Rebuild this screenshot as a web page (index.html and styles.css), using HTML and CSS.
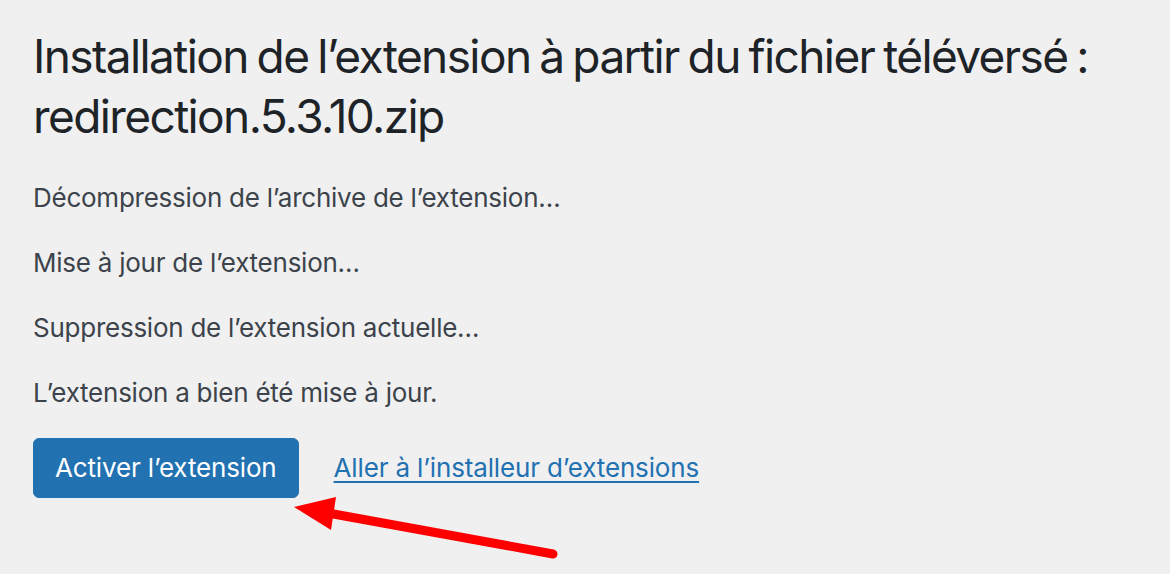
FILE: index.html
```html
<!DOCTYPE html>
<html lang="fr">
<head>
    <meta charset="UTF-8">
    <meta name="viewport" content="width=device-width, initial-scale=1.0">
    <title>Installation de l’extension</title>
    <link rel="stylesheet" href="styles.css">
</head>
<body>
    <div class="wrap">
        <h1>Installation de l’extension à partir du fichier téléversé : redirection.5.3.10.zip</h1>

        <p>Décompression de l’archive de l’extension…</p>
        <p>Mise à jour de l’extension…</p>
        <p>Suppression de l’extension actuelle…</p>
        <p>L’extension a bien été mise à jour.</p>

        <div class="actions">
            <a href="#" class="button-primary">Activer l’extension</a>
            <a href="#" class="link">Aller à l’installeur d’extensions</a>
        </div>
    </div>

    <!-- flèche d'annotation -->
    <svg class="arrow" width="1170" height="574" viewBox="0 0 1170 574">
        <line x1="553" y1="554" x2="328" y2="513" stroke="#ff0000" stroke-width="9" stroke-linecap="round"/>
        <polygon points="294,507 336,497 331,530" fill="#ff0000"/>
    </svg>
</body>
</html>
```

FILE: styles.css
```css
body {
    font-family: Inter, "Noto Sans", sans-serif;
    background-color: #f0f0f1;
    color: #3c434a;
    margin: 0;
    padding: 0;
}
.wrap {
    padding: 27px 0 0 33px;
}
h1 {
    font-size: 46px;
    font-weight: 400;
    line-height: 1.3;
    letter-spacing: -1.6px;
    word-spacing: -2.5px;
    color: #1d2327;
    margin: 0 0 31px 0;
    max-width: 1110px;
}
p {
    font-size: 26px;
    line-height: 39px;
    letter-spacing: -0.25px;
    margin: 0 0 26px 0;
}
.actions {
    display: flex;
    align-items: center;
    gap: 35px;
}
.button-primary {
    display: inline-block;
    height: 60px;
    line-height: 58px;
    box-sizing: border-box;
    padding: 0 21px;
    font-size: 26px;
    letter-spacing: -0.15px;
    color: #fff;
    background-color: #2271b1;
    border: 1px solid #2271b1;
    border-radius: 6px;
    text-decoration: none;
}
.link {
    font-size: 26px;
    letter-spacing: -0.15px;
    color: #2271b1;
    text-decoration: underline;
    text-underline-offset: 4px;
}
.arrow {
    position: absolute;
    left: 0;
    top: 0;
    pointer-events: none;
}
```
